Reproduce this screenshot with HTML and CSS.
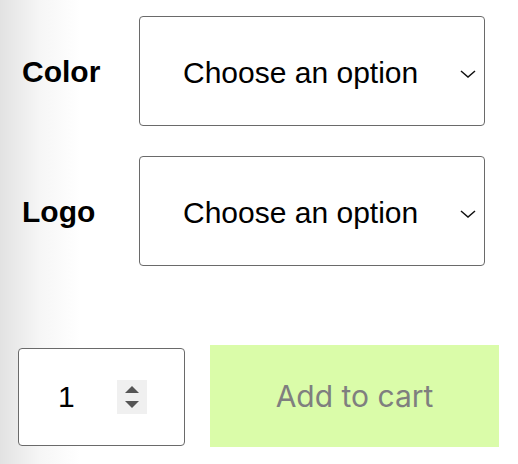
FILE: index.html
```html
<!DOCTYPE html>
<html lang="en">
<head>
<meta charset="utf-8">
<title>Variations</title>
<link rel="stylesheet" href="styles.css">
</head>
<body>
<form class="variations">
  <div class="row">
    <label class="label">Color</label>
    <div class="select">
      <span class="select-text">Choose an option</span>
      <svg class="chevron" width="16" height="8" viewBox="0 0 16 8"><path d="M1 1l7 6 7-6" fill="none" stroke="#111" stroke-width="1.5"/></svg>
    </div>
  </div>
  <div class="row">
    <label class="label">Logo</label>
    <div class="select">
      <span class="select-text">Choose an option</span>
      <svg class="chevron" width="16" height="8" viewBox="0 0 16 8"><path d="M1 1l7 6 7-6" fill="none" stroke="#111" stroke-width="1.5"/></svg>
    </div>
  </div>
  <div class="cart-row">
    <div class="qty">
      <span class="qty-value">1</span>
      <span class="spinner">
        <svg width="14" height="24" viewBox="0 0 14 24"><path d="M7 1l7 7H0z" fill="#555"/><path d="M0 16h14l-7 7z" fill="#555"/></svg>
      </span>
    </div>
    <button type="button" class="add-btn">Add to cart</button>
  </div>
</form>
</body>
</html>
```
FILE: styles.css
```css
html, body {
  margin: 0;
  padding: 0;
}
body {
  width: 518px;
  height: 464px;
  background: linear-gradient(to right, #e2e2e2 0, #f6f6f6 40px, #ffffff 80px);
  font-family: "Liberation Sans", Arial, sans-serif;
  color: #000;
  overflow: hidden;
}
.variations {
  display: flex;
  flex-direction: column;
  padding-top: 16px;
}
.row {
  display: flex;
  align-items: center;
  padding-left: 22px;
  margin-bottom: 30px;
}
.label {
  width: 117px;
  font-weight: bold;
  font-size: 30px;
  line-height: 1;
  padding-top: 2px;
}
.select {
  box-sizing: border-box;
  width: 346px;
  height: 110px;
  border: 1px solid #6a6a6a;
  border-radius: 4px;
  background: #fff;
  display: flex;
  align-items: center;
  padding-left: 43px;
  padding-right: 8px;
}
.select-text {
  flex: 1;
  font-size: 30px;
  line-height: 1;
  padding-top: 3px;
}
.chevron {
  display: block;
  margin-top: 5px;
}
.cart-row {
  display: flex;
  align-items: center;
  padding-left: 18px;
  margin-top: 49px;
}
.qty {
  box-sizing: border-box;
  width: 167px;
  height: 98px;
  margin-top: 2px;
  border: 1px solid #6a6a6a;
  border-radius: 4px;
  background: #fff;
  display: flex;
  align-items: center;
  padding-left: 39px;
}
.qty-value {
  font-size: 30px;
  line-height: 1;
  width: 59px;
}
.spinner {
  width: 30px;
  height: 34px;
  background: #f0f0f0;
  display: flex;
  align-items: center;
  justify-content: center;
}
.spinner svg {
  display: block;
}
.add-btn {
  margin-left: 25px;
  width: 289px;
  height: 102px;
  border: none;
  border-radius: 0;
  background: #dafca9;
  color: #7f7f7f;
  font-family: Inter, "Liberation Sans", sans-serif;
  font-size: 30px;
  padding: 0;
}
```
